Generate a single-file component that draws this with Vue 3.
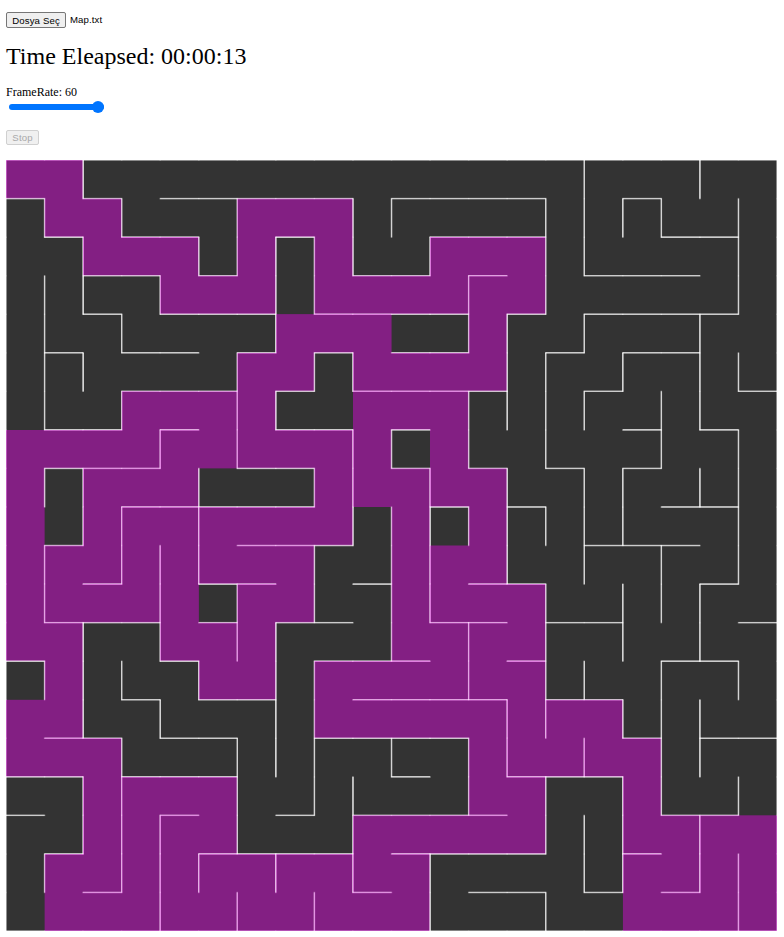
<script setup>
import { onMounted, ref } from 'vue'

const frameRate = ref(60)
const board = ref(null)
const SIZE = 20
const CELL = 50

// Visited cells per row, as inclusive column ranges
const visited = [
  [[0, 1]],
  [[1, 2], [6, 8]],
  [[2, 4], [6, 6], [8, 8], [11, 13]],
  [[4, 6], [8, 13]],
  [[7, 9], [12, 12]],
  [[6, 7], [9, 12]],
  [[3, 6], [9, 11]],
  [[0, 9], [11, 11]],
  [[0, 0], [2, 4], [8, 12]],
  [[0, 0], [2, 8], [10, 10], [12, 12]],
  [[0, 7], [10, 12]],
  [[0, 4], [6, 7], [10, 13]],
  [[0, 1], [4, 6], [10, 13]],
  [[1, 1], [5, 6], [8, 13]],
  [[0, 1], [8, 15]],
  [[0, 2], [12, 16]],
  [[2, 5], [12, 13], [16, 16]],
  [[2, 5], [9, 13], [16, 19]],
  [[1, 10], [16, 19]],
  [[1, 10], [16, 19]]
]

// Horizontal walls: one entry per grid line, as [from, to] columns
const horizontal = [
  [[0, 20]],
  [[0, 1], [2, 3], [4, 9], [10, 14], [16, 17]],
  [[1, 2], [3, 5], [7, 8], [11, 14], [17, 19]],
  [[2, 4], [5, 6], [9, 11], [12, 13], [15, 18]],
  [[2, 3], [4, 7], [8, 12], [13, 14], [15, 19]],
  [[1, 2], [3, 5], [6, 7], [8, 9], [10, 12], [14, 15], [16, 18]],
  [[3, 6], [7, 8], [9, 13], [15, 16], [19, 20]],
  [[1, 3], [4, 5], [7, 9], [10, 11], [16, 17], [18, 19]],
  [[1, 4], [6, 8], [10, 11], [12, 13], [14, 15], [16, 17]],
  [[3, 8], [11, 12], [13, 14], [17, 19]],
  [[1, 2], [6, 9], [15, 18]],
  [[2, 3], [5, 7], [9, 10], [12, 14], [18, 19]],
  [[1, 4], [5, 6], [7, 9], [11, 13], [14, 16], [19, 20]],
  [[0, 1], [4, 5], [8, 11], [13, 14], [17, 19]],
  [[3, 4], [5, 7], [9, 13], [14, 16]],
  [[1, 3], [4, 6], [8, 12], [16, 17], [18, 20]],
  [[0, 2], [3, 6], [10, 11], [13, 16]],
  [[0, 1], [4, 5], [7, 8], [9, 13], [17, 19]],
  [[1, 2], [5, 9], [10, 14], [16, 17]],
  [[2, 3], [9, 10], [12, 14], [15, 16], [17, 18]],
  [[0, 20]]
]

// Vertical walls: one entry per grid line, as [from, to] rows
const vertical = [
  [[0, 20]],
  [[1, 2], [3, 7], [8, 9], [10, 12], [13, 14], [18, 19]],
  [[0, 1], [2, 4], [5, 6], [8, 10], [12, 15], [16, 18]],
  [[1, 2], [4, 5], [6, 7], [9, 11], [13, 14], [15, 19]],
  [[3, 4], [7, 8], [10, 13], [14, 15], [17, 20]],
  [[2, 3], [8, 11], [13, 14], [18, 19]],
  [[1, 3], [5, 8], [11, 13], [15, 18], [19, 20]],
  [[2, 5], [6, 7], [12, 16], [18, 19]],
  [[2, 4], [5, 6], [8, 9], [10, 12], [13, 17], [19, 20]],
  [[1, 3], [5, 6], [7, 10], [16, 19]],
  [[1, 2], [7, 8], [9, 13], [15, 16]],
  [[2, 3], [8, 12], [18, 20]],
  [[3, 5], [6, 8], [9, 10], [12, 14], [15, 17]],
  [[4, 7], [8, 11], [14, 16]],
  [[1, 4], [5, 8], [9, 10], [11, 15], [16, 18], [19, 20]],
  [[0, 3], [4, 5], [6, 7], [8, 11], [13, 14], [15, 16], [17, 19]],
  [[1, 2], [5, 6], [8, 10], [11, 13], [14, 15], [16, 19]],
  [[1, 2], [6, 8], [10, 12], [13, 17]],
  [[0, 1], [4, 7], [8, 9], [11, 13], [14, 16], [17, 19]],
  [[1, 4], [5, 6], [7, 11], [13, 14], [16, 17], [18, 20]],
  [[0, 20]]
]

const isWall = (ranges, i) => ranges.some(([from, to]) => i >= from && i < to)
const isVisited = (row, col) => visited[row].some(([from, to]) => col >= from && col <= to)

function drawCell(ctx, row, col) {
  const x = col * CELL
  const y = row * CELL
  const line = (x1, y1, x2, y2) => {
    ctx.beginPath()
    ctx.moveTo(x1, y1)
    ctx.lineTo(x2, y2)
    ctx.stroke()
  }
  if (isWall(horizontal[row], col)) line(x, y, x + CELL, y)
  if (isWall(vertical[col + 1], row)) line(x + CELL, y, x + CELL, y + CELL)
  if (isWall(horizontal[row + 1], col)) line(x + CELL, y + CELL, x, y + CELL)
  if (isWall(vertical[col], row)) line(x, y + CELL, x, y)
  if (isVisited(row, col)) ctx.fillRect(x, y, CELL, CELL)
}

onMounted(() => {
  const ctx = board.value.getContext('2d')
  ctx.fillStyle = '#333333'
  ctx.fillRect(0, 0, SIZE * CELL, SIZE * CELL)
  ctx.strokeStyle = '#ffffff'
  ctx.lineWidth = 1.08
  ctx.lineCap = 'round'
  ctx.fillStyle = 'rgba(255, 0, 255, 0.392)'
  for (let row = 0; row < SIZE; row++) {
    for (let col = 0; col < SIZE; col++) drawCell(ctx, row, col)
  }
})
</script>

<template>
  <main class="page">
    <div class="file-row">
      <button class="btn" type="button">Dosya Seç</button>
      <span class="file-name">Map.txt</span>
    </div>
    <h1 class="timer">Time Eleapsed: 00:00:13</h1>
    <label class="rate-label" for="rate">FrameRate: {{ frameRate }}</label>
    <input id="rate" v-model="frameRate" class="rate" type="range" min="1" max="60" />
    <button class="btn stop" type="button" disabled>Stop</button>
    <canvas ref="board" class="board" width="1000" height="1000"></canvas>
  </main>
</template>

<style>
body {
  margin: 0;
  background: #fff;
}
</style>

<style scoped>
.page {
  display: flex;
  flex-direction: column;
  align-items: flex-start;
  padding: 12px 6px 0;
  color: #000;
  font-family: "Liberation Serif", "Times New Roman", serif;
  font-size: 12px;
}

.file-row {
  display: flex;
  align-items: center;
  gap: 4px;
  height: 16px;
  font-family: "Liberation Sans", Arial, sans-serif;
  font-size: 9.6px;
  letter-spacing: 0.1px;
}

.file-name {
  line-height: 14px;
}

.btn {
  box-sizing: border-box;
  width: 60px;
  height: 16px;
  padding: 0;
  border: 1px solid #767676;
  border-radius: 2px;
  background: #efefef;
  color: #000;
  font-family: "Liberation Sans", Arial, sans-serif;
  font-size: 9.6px;
  letter-spacing: 0.15px;
  line-height: 13px;
  white-space: nowrap;
}

.timer {
  margin: 14px 0 0;
  font-size: 24px;
  font-weight: 400;
  line-height: 28px;
}

.rate-label {
  margin-top: 15px;
  line-height: 14px;
}

.rate {
  appearance: none;
  width: 95px;
  height: 12px;
  margin: 2px 0 0 3px;
  background: transparent;
}

.rate::-webkit-slider-runnable-track {
  height: 6px;
  border-radius: 3px;
  background: #0075ff;
}

.rate::-webkit-slider-thumb {
  appearance: none;
  width: 12px;
  height: 12px;
  margin-top: -3px;
  border-radius: 50%;
  background: #0075ff;
}

.stop {
  width: 33px;
  height: 15px;
  margin-top: 17px;
  border-color: #d0d0d0;
  background: #f0f0f0;
  color: #a9a9a9;
}

.board {
  display: block;
  width: 771px;
  height: 771px;
  margin-top: 15px;
}
</style>
